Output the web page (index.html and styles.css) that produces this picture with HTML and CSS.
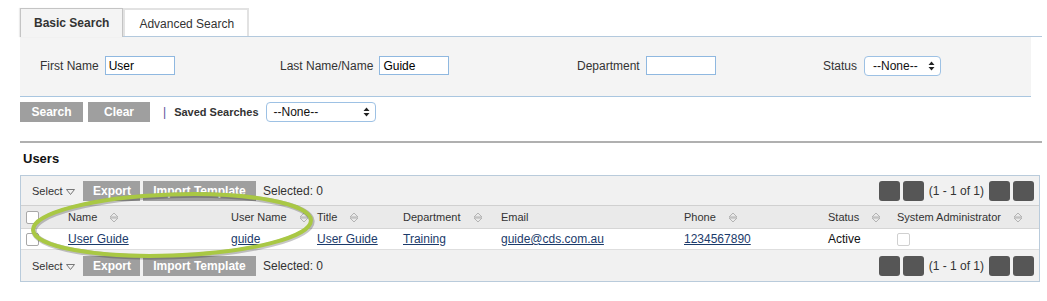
FILE: index.html
```html
<!DOCTYPE html>
<html lang="en">
<head>
    <meta charset="UTF-8">
    <title>Users</title>
    <link rel="stylesheet" href="styles.css">
</head>
<body>
    <div class="page">
        <!-- Search tabs -->
        <div class="tabs">
            <div class="tab active">Basic Search</div>
            <div class="tab">Advanced Search</div>
        </div>

        <div class="search-panel">
            <div class="field">
                <label>First Name</label>
                <input type="text" class="text-input" value="User">
            </div>
            <div class="field">
                <label>Last Name/Name</label>
                <input type="text" class="text-input" value="Guide">
            </div>
            <div class="field">
                <label>Department</label>
                <input type="text" class="text-input" value="">
            </div>
            <div class="field">
                <label>Status</label>
                <div class="select status-select">
                    <span>--None--</span>
                    <svg width="7" height="10" viewBox="0 0 7 10"><path d="M3.5 0.5 L6.5 4 L0.5 4 Z M0.5 6 L6.5 6 L3.5 9.5 Z" fill="#222"/></svg>
                </div>
            </div>
        </div>

        <div class="actions">
            <button class="btn search-btn">Search</button>
            <button class="btn clear-btn">Clear</button>
            <span class="divider">|</span>
            <span class="saved-label">Saved Searches</span>
            <div class="select saved-select">
                <span>--None--</span>
                <svg width="7" height="10" viewBox="0 0 7 10"><path d="M3.5 0.5 L6.5 4 L0.5 4 Z M0.5 6 L6.5 6 L3.5 9.5 Z" fill="#222"/></svg>
            </div>
        </div>

        <div class="section-rule"></div>
        <h2 class="section-title">Users</h2>

        <!-- Results grid -->
        <div class="grid">
            <div class="toolbar">
                <span class="select-menu">Select <svg width="9" height="6" viewBox="0 0 9 6"><path d="M0.5 0.5 L8.5 0.5 L4.5 5.5 Z" fill="none" stroke="#777"/></svg></span>
                <button class="btn small-btn export-btn">Export</button>
                <button class="btn small-btn import-btn">Import Template</button>
                <span class="selected">Selected: 0</span>
                <div class="pager">
                    <span class="page-btn"></span>
                    <span class="page-btn"></span>
                    <span class="page-info">(1 - 1 of 1)</span>
                    <span class="page-btn"></span>
                    <span class="page-btn"></span>
                </div>
            </div>

            <table class="results">
                <colgroup>
                    <col style="width: 41px">
                    <col style="width: 163px">
                    <col style="width: 86px">
                    <col style="width: 86px">
                    <col style="width: 98px">
                    <col style="width: 183px">
                    <col style="width: 144px">
                    <col style="width: 69px">
                    <col>
                </colgroup>
                <thead>
                    <tr>
                        <th class="check-cell"><span class="checkbox"></span></th>
                        <th>Name <i class="sort"></i></th>
                        <th>User Name <i class="sort"></i></th>
                        <th>Title <i class="sort"></i></th>
                        <th>Department <i class="sort"></i></th>
                        <th>Email</th>
                        <th>Phone <i class="sort"></i></th>
                        <th>Status <i class="sort"></i></th>
                        <th>System Administrator <i class="sort"></i></th>
                    </tr>
                </thead>
                <tbody>
                    <tr>
                        <td class="check-cell"><span class="checkbox"></span></td>
                        <td><a href="#">User Guide</a></td>
                        <td><a href="#">guide</a></td>
                        <td><a href="#">User Guide</a></td>
                        <td><a href="#">Training</a></td>
                        <td><a href="#">guide@cds.com.au</a></td>
                        <td><a href="#">1234567890</a></td>
                        <td>Active</td>
                        <td><span class="checkbox disabled"></span></td>
                    </tr>
                </tbody>
            </table>

            <div class="toolbar bottom">
                <span class="select-menu">Select <svg width="9" height="6" viewBox="0 0 9 6"><path d="M0.5 0.5 L8.5 0.5 L4.5 5.5 Z" fill="none" stroke="#777"/></svg></span>
                <button class="btn small-btn export-btn">Export</button>
                <button class="btn small-btn import-btn">Import Template</button>
                <span class="selected">Selected: 0</span>
                <div class="pager">
                    <span class="page-btn"></span>
                    <span class="page-btn"></span>
                    <span class="page-info">(1 - 1 of 1)</span>
                    <span class="page-btn"></span>
                    <span class="page-btn"></span>
                </div>
            </div>
        </div>

        <!-- Annotation ring over the name columns -->
        <svg class="highlight" width="300" height="80" viewBox="0 0 300 80">
            <ellipse cx="152" cy="41" rx="139" ry="30.5" transform="rotate(-2 152 41)" fill="none" stroke="rgba(0,0,0,0.22)" stroke-width="5.5"/>
            <ellipse cx="151" cy="40" rx="139" ry="30.5" transform="rotate(-2 151 40)" fill="none" stroke="#a9c844" stroke-width="4"/>
        </svg>
    </div>
</body>
</html>
```

FILE: styles.css
```css
/* General Styles */
body {
    font-family: "Liberation Sans", Arial, sans-serif;
    font-size: 12px;
    color: #333;
    margin: 0;
    padding: 0;
    background-color: #ffffff;
}

.page {
    position: relative;
    padding: 8px 5px 0 20px;
}

/* Tabs */
.tabs {
    display: flex;
    border-bottom: 1px solid #b3c9dd;
    height: 28px;
}

.tab {
    height: 28px;
    line-height: 28px;
    padding: 0 13px 0 14px;
    background-color: #ffffff;
    border: 2px solid #e2e2e2;
    border-bottom: none;
    box-sizing: border-box;
    color: #333;
}

.tab.active {
    height: 29px;
    padding: 0 13px;
    font-weight: bold;
    background-color: #f4f4f4;
    border: 1px solid #c4c4c4;
    border-bottom: none;
    box-shadow: -1px 0 1px rgba(0, 0, 0, 0.08);
}

/* Search Panel */
.search-panel {
    display: grid;
    grid-template-columns: 240px 297px 246px auto;
    align-items: center;
    width: 991px;
    height: 57px;
    padding: 0 0 2px 20px;
    background-color: #f4f4f4;
    border-bottom: 1px solid #a9c6e0;
}

.field {
    display: flex;
    align-items: center;
}

.field label {
    margin-right: 6px;
}

.text-input {
    width: 70px;
    height: 19px;
    box-sizing: border-box;
    border: 1px solid #8fb8e0;
    padding: 0 3px;
    font-family: inherit;
    font-size: 12px;
    color: #000;
    background-color: #ffffff;
    outline: none;
}

.select {
    display: flex;
    align-items: center;
    justify-content: space-between;
    box-sizing: border-box;
    height: 20px;
    padding: 0 5px 0 8px;
    border: 1px solid #9dc1e4;
    border-radius: 4px;
    background-color: #ffffff;
    color: #111;
    font-size: 12px;
}

.status-select {
    width: 77px;
    margin-left: 1px;
}

/* Buttons */
.actions {
    display: flex;
    align-items: center;
    margin-top: 4px;
    height: 22px;
}

.btn {
    border: none;
    background-color: #9f9f9f;
    color: white;
    font-family: inherit;
    font-weight: bold;
    font-size: 12px;
    padding: 0;
    cursor: pointer;
}

.search-btn {
    width: 63px;
    height: 20px;
}

.clear-btn {
    width: 62px;
    height: 20px;
    margin-left: 5px;
}

.divider {
    color: #5a4f9a;
    margin-left: 13px;
    font-size: 12px;
}

.saved-label {
    font-weight: bold;
    font-size: 11px;
    margin-left: 8px;
    color: #333;
}

.saved-select {
    width: 110px;
    margin-left: 7px;
    padding-left: 7px;
}

/* Users section */
.section-rule {
    height: 2px;
    background-color: #b0b0b0;
    margin-top: 18px;
}

.section-title {
    font-size: 13px;
    font-weight: bold;
    color: #111;
    margin: 8px 0 0 3px;
    height: 24px;
    line-height: 15px;
}

.grid {
    width: 1018px;
    border: 1px solid #b9cbdb;
}

.toolbar {
    display: flex;
    align-items: center;
    height: 29px;
    padding: 0 5px 0 11px;
    background-color: #f1f1f1;
    border-bottom: 1px solid #d0d0d0;
}

.toolbar.bottom {
    height: 31px;
    border-bottom: none;
    border-top: 1px solid #dedede;
}

.select-menu {
    font-size: 11px;
    display: flex;
    align-items: center;
    gap: 3px;
    width: 51px;
}

.select-menu svg {
    margin-top: 3px;
}

.small-btn {
    height: 20px;
    padding: 0 10px;
    margin-right: 3px;
}

.export-btn {
    width: 57px;
}

.import-btn {
    width: 113px;
}

.selected {
    margin-left: 4px;
    font-size: 12px;
}

.pager {
    margin-left: auto;
    display: flex;
    align-items: center;
    gap: 3px;
}

.page-btn {
    width: 21px;
    height: 20px;
    background-color: #565656;
    border-radius: 3px;
}

.page-info {
    font-size: 12px;
    margin: 0 2px;
}

/* Results table */
.results {
    width: 100%;
    border-collapse: collapse;
    table-layout: fixed;
}

.results th {
    text-align: left;
    font-weight: normal;
    font-size: 11px;
    height: 22px;
    padding: 0 0 0 6px;
    background-color: #eaeaea;
    border-bottom: 1px solid #d6d6d6;
    white-space: nowrap;
}

.results td {
    height: 20px;
    padding: 0 0 0 6px;
    font-size: 12px;
    color: #111;
    background-color: #ffffff;
}

.results .check-cell {
    padding-left: 5px;
}

.results a {
    color: #1b3b6b;
    text-decoration: underline;
}

.checkbox {
    display: inline-block;
    width: 11px;
    height: 11px;
    border: 1px solid #a8a8a8;
    border-radius: 2px;
    background-color: #ffffff;
    vertical-align: middle;
}

.checkbox.disabled {
    border-color: #d0d0d0;
}

/* Sort icon: two outlined triangles sharing a base */
.sort {
    display: inline-block;
    width: 10px;
    height: 11px;
    margin-left: 9px;
    vertical-align: middle;
    background-image: url("data:image/svg+xml,%3Csvg xmlns='http://www.w3.org/2000/svg' width='10' height='11' viewBox='0 0 10 11'%3E%3Cpath d='M1 5 L5 1 L9 5 Z M1 6 L9 6 L5 10 Z' fill='none' stroke='%23b4b4b4' stroke-width='1'/%3E%3C/svg%3E");
}

/* Annotation */
.highlight {
    position: absolute;
    left: 21px;
    top: 185px;
    pointer-events: none;
}
```
